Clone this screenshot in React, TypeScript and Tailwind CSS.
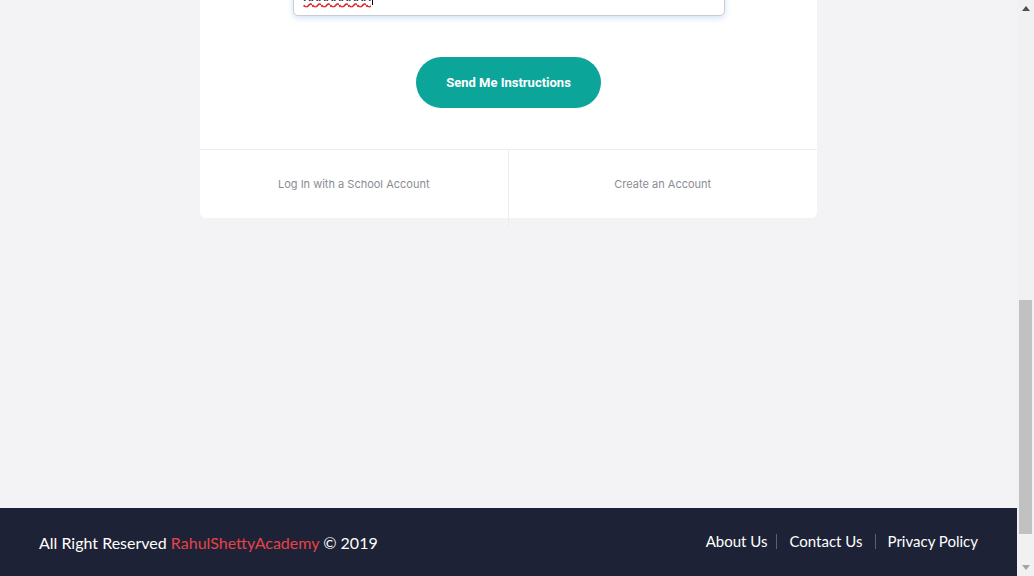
import React from "react";

export default function App() {
  return (
    <div className="flex h-[576px] w-[1034px] overflow-hidden bg-[#f3f3f5]" style={{ fontFamily: "Lato, 'Open Sans', sans-serif" }}>
      <div className="flex w-[1017px] flex-col">
        <div className="flex flex-1 justify-center">
          <div className="mt-[-44px] h-[262px] w-[617px] rounded-b-[6px] bg-white flex flex-col">
            <div className="flex justify-center pt-0">
              <div className="h-[60px] w-[432px] rounded-[5px] border border-[#c9ccd3] bg-white shadow-[0_2px_6px_rgba(120,170,230,0.35)] flex items-end px-[10px] pb-[12px]">
                <span className="text-[15px] leading-none text-[#222] underline decoration-wavy decoration-[#e02020] underline-offset-[1px]" style={{ fontFamily: "'Liberation Sans', sans-serif" }}>
                  xxxxxxxxx
                </span>
                <span className="ml-[1px] mb-[-2px] h-[16px] w-px bg-black" />
              </div>
            </div>
            <div className="flex justify-center pt-[41px] pb-[41px]">
              <button className="h-[51px] w-[185px] rounded-full bg-[#0ba59a] text-[13px] font-bold text-white" style={{ fontFamily: "Roboto, sans-serif" }}>
                Send Me Instructions
              </button>
            </div>
            <div className="grid flex-1 grid-cols-2 border-t border-[#ebedf0]">
              <div className="relative flex items-center justify-center border-r border-[#ebedf0] text-[11px] text-[#8a8d93]" style={{ fontFamily: "Inter, sans-serif" }}>
                Log In with a School Account
                <span className="absolute right-[-1px] bottom-[-10px] h-[10px] w-px bg-[#ebedf0]" />
              </div>
              <div className="flex items-center justify-center text-[11px] text-[#8a8d93]" style={{ fontFamily: "Inter, sans-serif" }}>
                Create an Account
              </div>
            </div>
          </div>
        </div>
        <footer className="flex h-[68px] items-center justify-between bg-[#1e2236] pl-[39px] pr-[39px] text-[16px] text-white">
          <div className="pt-[2px]">
            All Right Reserved <span className="text-[#e5434a]">RahulShettyAcademy</span> © 2019
          </div>
          <div className="flex items-center pb-[2px] text-[15px]">
            <span className="pr-[9px]">About Us</span>
            <span className="h-[15px] w-px bg-[#5c6070]" />
            <span className="px-[12px]">Contact Us</span>
            <span className="h-[15px] w-px bg-[#5c6070]" />
            <span className="pl-[12px]">Privacy Policy</span>
          </div>
        </footer>
      </div>
      <div className="flex h-[576px] w-[17px] flex-col bg-[#f1f1f1]">
        <div className="flex h-[17px] items-center justify-center">
          <svg width="8" height="5" viewBox="0 0 8 5"><path d="M0 5 L4 0 L8 5 Z" fill="#505050" /></svg>
        </div>
        <div className="flex-1 flex flex-col px-[2px]">
          <div className="h-[283px]" />
          <div className="h-[234px] bg-[#c1c1c1]" />
        </div>
        <div className="flex h-[17px] items-center justify-center">
          <svg width="8" height="5" viewBox="0 0 8 5"><path d="M0 0 L8 0 L4 5 Z" fill="#a3a3a3" /></svg>
        </div>
      </div>
    </div>
  );
}
